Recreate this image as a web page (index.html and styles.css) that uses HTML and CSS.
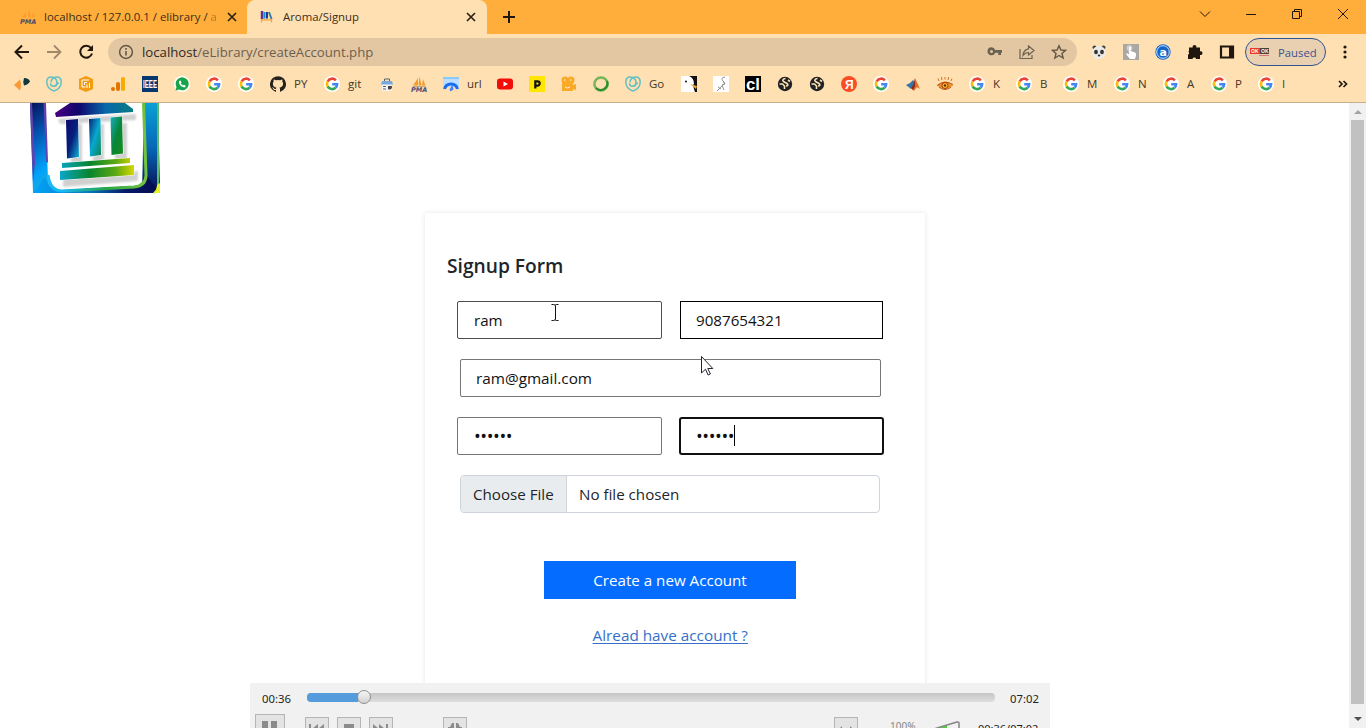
FILE: index.html
```html
<!DOCTYPE html>
<html lang="en">
<head>
<meta charset="utf-8">
<title>Aroma/Signup</title>
<link rel="stylesheet" href="styles.css">
</head>
<body>
<svg class="defs" width="0" height="0">
  <defs>
    <symbol id="g" viewBox="0 0 16 16"><circle cx="8" cy="8" r="8" fill="#fff"/><g fill="none" stroke-width="2.6"><path d="M11.900 4.300A5.100 5.100 0 0 0 3.600 5.500" stroke="#ea4335"/><path d="M3.600 5.500a5.100 5.100 0 0 0 0 5" stroke="#fbbc05"/><path d="M3.600 10.500a5.100 5.100 0 0 0 8 1.200" stroke="#34a853"/><path d="M11.600 11.700A5.100 5.100 0 0 0 13.100 8.300H8.200" stroke="#4285f4"/></g></symbol>
    <symbol id="heart" viewBox="0 0 16 16"><g fill="none" stroke="#62bfc4" stroke-width="1.500"><path d="M8 15C3.500 13.500.8 10 .8 6 .8 2.800 2.800 1 5.300 1c3.300 0 5.700 2.500 5.700 5.300 0 2.200-1.600 4-3.500 4S4.500 9 4.500 7.300"/><path d="M8 15c4.500-1.500 7.200-5 7.200-9 0-3.200-2-5-4.500-5C7.400 1 5 3.500 5 6.300"/><path d="M8 10.200c1.700 0 3-1.200 3-3h2"/></g></symbol>
    <symbol id="globe" viewBox="0 0 16 16"><circle cx="8" cy="8" r="7.200" fill="#202124"/><path d="M8.500 2.500c-2.500.3-3.500 1.800-2 3L10 7.500c1.500 1 1 2.500-1 2.500M2.500 8h3l2 2v3M11 4l2 1.500" stroke="#ffe0b3" stroke-width="1.600" fill="none"/></symbol>
    <symbol id="x" viewBox="0 0 10 10"><path d="M1 1l8 8M9 1L1 9" stroke="#2b2116" stroke-width="1.700"/></symbol>
    <symbol id="sail" viewBox="0 0 16 16"><path d="M2 9.500L7 2v7.500zM7.500 9.500L8.500 0l2.200 9.500zM11 9.500L12 3l2.500 6.500z" fill="#f59b2c"/><path d="M1 10h14l-1 1H2z" fill="#b8a58d"/><text x="0" y="15.500" class="pma">PMA</text></symbol>
    <linearGradient id="lg1" x1="0" y1="0" x2="0.300" y2="1"><stop offset="0" stop-color="#071057"/><stop offset=".4" stop-color="#0557b5"/><stop offset=".8" stop-color="#00a4fa"/><stop offset="1" stop-color="#20a8d8"/></linearGradient>
    <linearGradient id="lg2" x1="0" y1="0" x2="0" y2="1"><stop offset="0" stop-color="#09a1d5"/><stop offset=".5" stop-color="#0767b6"/><stop offset="1" stop-color="#060b50"/></linearGradient>
    <linearGradient id="lgb"><stop offset="0" stop-color="#00a4fa"/><stop offset=".45" stop-color="#0878bd"/><stop offset=".75" stop-color="#061a68"/><stop offset="1" stop-color="#060b50"/></linearGradient>
    <linearGradient id="lge" x1="0" y1="0" x2="1" y2="0"><stop offset="0" stop-color="#18b7f5"/><stop offset=".15" stop-color="#18b7f5"/><stop offset=".6" stop-color="#26a646"/><stop offset="1" stop-color="#74c43d"/></linearGradient>
    <linearGradient id="roof"><stop offset="0" stop-color="#4a0080"/><stop offset=".3" stop-color="#10056c"/><stop offset=".65" stop-color="#0868aa"/><stop offset="1" stop-color="#087b83"/></linearGradient>
    <linearGradient id="p1" x1="0" y1="0" x2="1" y2="1"><stop offset="0" stop-color="#10056c"/><stop offset=".5" stop-color="#05207d"/><stop offset="1" stop-color="#13b7d8"/></linearGradient>
    <linearGradient id="p2" x1="0" y1="0" x2="1" y2="1"><stop offset="0" stop-color="#06237b"/><stop offset=".5" stop-color="#08a8cf"/><stop offset="1" stop-color="#0b8450"/></linearGradient>
    <linearGradient id="p3" x1="0" y1="0" x2="1" y2="1"><stop offset="0" stop-color="#16afc0"/><stop offset=".5" stop-color="#08853a"/><stop offset="1" stop-color="#168c18"/></linearGradient>
    <linearGradient id="base"><stop offset="0" stop-color="#0aa6c8"/><stop offset=".4" stop-color="#07852d"/><stop offset=".75" stop-color="#5da812"/><stop offset="1" stop-color="#d6d800"/></linearGradient>
    <filter id="soft"><feGaussianBlur stdDeviation="1"/></filter>
  </defs>
</svg>

<header class="browser">
  <div class="tabs">
    <div class="tab tab-idle">
      <svg width="16" height="16" viewBox="0 0 16 16"><path d="M2 8l4-5v5zM8 8l1-8 2 8zM12 8l1-5 2 5z" fill="#ff9b2b"/><text x="0" y="14.500" class="pma">PMA</text></svg>
      <span class="tab-title idle-title">localhost / 127.0.0.1 / elibrary / <i>a</i></span>
      <svg width="10" height="10"><use href="#x"/></svg>
    </div>
    <div class="tab tab-active">
      <svg width="14" height="14" viewBox="0 0 14 14"><path d="M2 1v8" stroke="#63308e" stroke-width="2.500"/><path d="M4.500 2v6.500" stroke="#168cd5" stroke-width="2"/><path d="M7 2v6.500" stroke="#133a97" stroke-width="2"/><path d="M9 2l2.500 7" stroke="#387ca2" stroke-width="2"/><path d="M1.500 12.500V9.800h10v2.700" stroke="#f1a13a" stroke-width="1.300" fill="none"/></svg>
      <span class="tab-title">Aroma/Signup</span>
      <svg width="10" height="10"><use href="#x"/></svg>
    </div>
    <svg class="plus" width="12" height="12"><path d="M6 0v12M0 6h12" stroke="#20180e" stroke-width="2"/></svg>
    <div class="window-buttons">
      <svg width="12" height="12" viewBox="0 0 12 12"><path d="M1 3.500l5 5 5-5"/></svg>
      <svg width="12" height="12" viewBox="0 0 12 12"><path d="M1 6.500h10"/></svg>
      <svg width="12" height="12" viewBox="0 0 12 12"><path d="M1.500 3.500h7v7h-7zM3.500 3.500v-2h7v7h-2"/></svg>
      <svg width="12" height="12" viewBox="0 0 12 12"><path d="M1 1l10 10M11 1L1 11"/></svg>
    </div>
  </div>

  <div class="toolbar">
    <div class="nav">
      <svg width="16" height="16" viewBox="0 0 16 16"><path d="M15 8H2M8 1.500L1.500 8 8 14.500" stroke="#20180e" stroke-width="2" fill="none"/></svg>
      <svg width="16" height="16" viewBox="0 0 16 16"><path d="M1 8h13M8 1.500L14.500 8 8 14.500" stroke="#a08969" stroke-width="1.800" fill="none"/></svg>
      <svg width="16" height="16" viewBox="0 0 16 16"><path d="M13 4A6 6 0 1 0 14 9.500" stroke="#20180e" stroke-width="2" fill="none"/><path d="M15 1v6H9z" fill="#20180e"/></svg>
    </div>
    <div class="omnibox">
      <svg width="16" height="16" viewBox="0 0 16 16"><circle cx="8" cy="8" r="6.400" fill="none" stroke="#625744" stroke-width="1.500"/><path d="M8 7v4.500M8 4v1.700" stroke="#625744" stroke-width="1.600"/></svg>
      <span class="url"><b>localhost</b>/eLibrary/createAccount.php</span>
      <div class="omni-icons">
        <svg width="16" height="16" viewBox="0 0 16 16"><path fill-rule="evenodd" d="M4.500 3.300a4 4 0 1 0 3.700 5.500h3V11H14V8.800h1V6H8.200a4 4 0 0 0-3.700-2.700zm0 2.700a1.500 1.500 0 1 1 0 3 1.500 1.500 0 0 1 0-3z" fill="#6b6250"/></svg>
        <svg width="16" height="16" viewBox="0 0 16 16"><path d="M1 5v9.500h12V11M9.500 2L15 6.500 9.500 11V8.500C7 8.500 5.500 9.500 4 11.500c.3-4 2.500-6.200 5.500-6.700z" stroke="#6b6250" stroke-width="1.200" fill="none"/></svg>
        <svg width="16" height="16" viewBox="0 0 16 16"><path d="M8 1.800l1.900 4.200 4.600.4-3.500 3 1.100 4.600L8 11.500 3.900 14 5 9.400l-3.500-3 4.600-.4z" stroke="#625744" stroke-width="1.400" fill="none"/></svg>
      </div>
    </div>
    <div class="extensions">
      <svg width="16" height="16" viewBox="0 0 16 16"><circle cx="3.500" cy="3.500" r="2" fill="#444"/><circle cx="12.500" cy="3.500" r="2" fill="#444"/><ellipse cx="8" cy="8.500" rx="7" ry="6.500" fill="#eceae6"/><ellipse cx="5" cy="8" rx="1.900" ry="2.300" fill="#333"/><ellipse cx="11" cy="8" rx="1.900" ry="2.300" fill="#333"/><ellipse cx="8" cy="11.500" rx="1.300" ry=".9" fill="#333"/></svg>
      <svg width="16" height="16" viewBox="0 0 16 16"><path fill="#aaa8a3" d="M0 0h16v16H0z"/><path d="M5.500 3q1.500-1.500 2.500 0v4l4 1.500q1.500.5 1 3L12 15H7l-4-5 1-.8 2 1.300z" fill="#fff"/><circle cx="6.500" cy="4" r="2.500" stroke="#ddd" fill="none"/></svg>
      <svg width="16" height="16" viewBox="0 0 16 16"><circle cx="8" cy="8" r="7.700" fill="#1565c6"/><circle cx="8" cy="8" r="6.300" fill="#1565c6" stroke="#e8f1fb" stroke-width=".9"/><text x="4.600" y="11.700" class="ext-a">a</text></svg>
      <svg width="16" height="16" viewBox="0 0 16 16"><path d="M2 3.500h3.700a1.900 1.900 0 1 1 3.600 0H13v3.800a1.900 1.900 0 1 1 0 3.600V15H9.200a2 2 0 0 0-3.800 0H1v-4.200a2 2 0 0 0 0-3.600h1z" fill="#20180e"/></svg>
      <svg width="16" height="16" viewBox="0 0 16 16"><path d="M2 2.500h12v11H2z" fill="none" stroke="#20180e" stroke-width="2.200"/><path d="M10 2h4v12h-4z" fill="#20180e"/></svg>
    </div>
    <div class="profile">
      <svg width="20" height="10" viewBox="0 0 20 10"><path fill="#e6392b" d="M0 1h10v6H0z"/><path fill="#4a4040" d="M10 1h9v6h-9z"/><path fill="#d87870" d="M9 8h10v1H9z"/><text x="1" y="6" class="ok">OK</text><text x="11" y="6" class="ok">OK</text></svg>
      <span>Paused</span>
    </div>
    <svg class="kebab" width="4" height="14"><circle cx="2" cy="2" r="1.600"/><circle cx="2" cy="7" r="1.600"/><circle cx="2" cy="12" r="1.600"/></svg>
  </div>

  <nav class="bookmarks">
    <a><svg viewBox="0 0 16 16"><path d="M0 9l6-5.500Q8 9 6 14.500z" fill="#f99a36"/><path d="M10 2q5 0 6 3.500-2 3.500-6 4-1.500-3.500 0-7.500z" fill="#11383c"/></svg></a>
    <a><svg><use href="#heart"/></svg></a>
    <a><svg viewBox="0 0 16 16"><path d="M8 0l7 3v10l-7 3-7-3V3z" fill="#f39c12"/><path d="M11 4H4v7h3.500M9 6.500H6.500v2.500M9 12V8.500M11.500 12V7" stroke="#fff" fill="none"/></svg></a>
    <a><svg viewBox="0 0 16 16"><rect x="11" y="1" width="4" height="14" rx="2" fill="#f9ab00"/><rect x="6" y="6" width="4" height="9" rx="2" fill="#e37400"/><circle cx="3" cy="13" r="2" fill="#e37400"/></svg></a>
    <a><svg viewBox="0 0 16 16"><path d="M0 0h16v16H0z" fill="#06386f"/><text x="1" y="11.500" textLength="14" lengthAdjust="spacingAndGlyphs" class="ieee">IEEE</text></svg></a>
    <a><svg viewBox="0 0 16 16"><circle cx="8" cy="8" r="8" fill="#fff"/><path d="M1.500 14.500l1-3.500A6.500 6.500 0 1 1 5 13.500z" fill="#16a34b"/><path d="M5 5l1.500-.5 1 2-.7 1 2 2 1-.7 1.900 1-.5 1.500C7.500 11.500 4.500 8.500 5 5z" fill="#fff"/></svg></a>
    <a><svg><use href="#g"/></svg></a>
    <a><svg><use href="#g"/></svg></a>
    <a><svg viewBox="0 0 16 16"><path d="M8 .2a8 8 0 0 0-2.500 15.600c.4.100.5-.2.500-.4v-1.500c-2.200.5-2.700-1-2.700-1-.4-.9-.9-1.200-.9-1.200-.7-.5.100-.5.100-.5.800.1 1.200.8 1.200.8.700 1.300 1.900.9 2.300.7.100-.5.300-.9.500-1.100-1.800-.2-3.600-.9-3.600-4 0-.9.300-1.600.8-2.100-.1-.2-.4-1 .1-2.100 0 0 .7-.2 2.200.8a7.700 7.700 0 0 1 4 0c1.500-1 2.200-.8 2.200-.8.400 1.100.2 1.900.1 2.100.5.600.8 1.300.8 2.100 0 3.100-1.900 3.800-3.700 4 .3.300.6.700.6 1.500v2.300c0 .2.100.5.500.4A8 8 0 0 0 8 .2z" fill="#25211c"/></svg><span>PY</span></a>
    <a><svg><use href="#g"/></svg><span>git</span></a>
    <a><svg viewBox="0 0 16 16"><path d="M3 7h10v8H3z" fill="#f4f3ef"/><path d="M3 5h10l1 3.500H2z" fill="#79a8dd"/><path d="M5.500 5V3h5v2M4 10.500h3M4 13h3" stroke="#59636b" fill="none"/><path d="M9 10h4q0 5-4 3z" fill="#444"/></svg></a>
    <a><svg><use href="#sail"/></svg></a>
    <a><svg viewBox="0 0 16 16"><path d="M0 1h16v10H0z" fill="#bcdfff"/><path d="M0 1h16v2H0z" fill="#8bcaff"/><path d="M1.500 13a6.700 6.700 0 0 1 13 0" stroke="#196df1" stroke-width="3" fill="none"/><path d="M9.500 8.500l1 5-3 2-1-2z" fill="#4a82ef"/></svg><span>url</span></a>
    <a><svg viewBox="0 0 16 16"><rect y="2.500" width="16" height="11" rx="3" fill="#f10d09"/><path d="M6.500 5.500v5L11 8z" fill="#fff"/></svg></a>
    <a><svg viewBox="0 0 16 16"><path fill="#ffe600" d="M0 0h16v16H0z"/><path d="M6.300 12.500V5.300h2.200a2.200 2.200 0 0 1 0 4.400H6.500" stroke="#111" stroke-width="2.200" fill="none"/></svg></a>
    <a><svg viewBox="0 0 16 16"><g fill="#f8aa28"><circle cx="4" cy="4" r="3.500"/><circle cx="10" cy="4" r="3.500"/><path d="M1 6h11v3l3-1v6l-3-1v2H1z"/></g><path d="M3 4h1.500M9 4h1.500M4 11q2.500 2 5 0" stroke="#fff0cc" fill="none"/></svg></a>
    <a><svg viewBox="0 0 16 16"><circle cx="8" cy="8" r="6.600" fill="none" stroke="#76b65a" stroke-width="2.500"/><path d="M3 12A6.700 6.700 0 0 0 14 5" stroke="#318e2c" stroke-width="2.200" fill="none"/></svg></a>
    <a><svg><use href="#heart"/></svg><span>Go</span></a>
    <a><svg viewBox="0 0 16 16"><path d="M0 0h16v16H0z" fill="#111"/><path d="M0 0h8q5 2 5 8-2 0 1 8H0z" fill="#fff"/><circle cx="5" cy="5.500" r="1" fill="#111"/><path d="M9 8l7 2-1 3z" fill="#e9a13b"/></svg></a>
    <a><svg viewBox="0 0 16 16"><path d="M0 0h16v16H0z" fill="#fff"/><path d="M12 1q-5 1-2 4 3 2-1 5l-5 5M10 5l2 3-3 1 2 5M5 11l3 2" stroke="#888" stroke-width=".9" fill="none"/></svg></a>
    <a><svg viewBox="0 0 16 16"><path d="M0 0h16v16H0z" fill="#000"/><text x="1" y="13.500" textLength="14" lengthAdjust="spacingAndGlyphs" class="cl">cl</text></svg></a>
    <a><svg><use href="#globe"/></svg></a>
    <a><svg><use href="#globe"/></svg></a>
    <a><svg viewBox="0 0 16 16"><circle cx="8" cy="8" r="8" fill="#fb4d23"/><text x="4" y="12.500" class="ya">Я</text></svg></a>
    <a><svg><use href="#g"/></svg></a>
    <a><svg viewBox="0 0 16 16"><path d="M1 9l4-2 3-3 2 3-4 6z" fill="#3974a6"/><path d="M6 12q3-3 4-10l5 11-3-2-3 4z" fill="#e16d24"/><path d="M6 12q3-3 4-10v8l-2 4z" fill="#872a21"/></svg></a>
    <a><svg viewBox="0 0 16 16"><path d="M0 9.500Q8 1.500 16 9.500 8 16.500 0 9.500z" fill="#e6922d"/><path d="M0 9.500Q8 3.500 16 8.500M2 11q6 5 12 0" stroke="#bd541c" fill="none"/><circle cx="8" cy="9.500" r="3" fill="#fcc22c" stroke="#a63917"/><circle cx="8" cy="9.500" r="1.200" fill="#6b2511"/><path d="M2 5L1 2.500M5 4l-.7-3M8 3.500V1M11 4l.7-3M14 5l1-2.500" stroke="#ce7027"/></svg></a>
    <a><svg><use href="#g"/></svg><span>K</span></a>
    <a><svg><use href="#g"/></svg><span>B</span></a>
    <a><svg><use href="#g"/></svg><span>M</span></a>
    <a><svg><use href="#g"/></svg><span>N</span></a>
    <a><svg><use href="#g"/></svg><span>A</span></a>
    <a><svg><use href="#g"/></svg><span>P</span></a>
    <a><svg><use href="#g"/></svg><span>I</span></a>
    <a><svg viewBox="0 0 16 16"><path d="M4 5l3 3-3 3M8.500 5l3 3-3 3" stroke="#20180e" stroke-width="1.700" fill="none"/></svg></a>
  </nav>
</header>

<div class="viewport">
  <main class="page">
    <svg class="logo" width="132" height="91" viewBox="0 0 132 91">
      <path d="M0 0h15l3 76q1 13 13 14H3z" fill="url(#lg1)"/>
      <path d="M0 0h2l3 60-2 20zM13.500 0h2.500l2 60-2-2z" fill="#6042ae"/>
      <path d="M114 0h14l2 84-5 6h-13z" fill="url(#lg2)"/>
      <path d="M3 90l12-16q4 14 17 13l72-4q11-1 11-13l11 15-2 5z" fill="url(#lgb)"/>
      <path d="M18 72q2 16 14 16l72-4q12-1 12-12L113.500 0" fill="none" stroke="url(#lge)" stroke-width="3"/>
      <path d="M128 0v83q0 4-4 7" fill="none" stroke="#5cb968" stroke-width="2"/><path d="M130 80v10h-7q4-3 4-8z" fill="#e7ef25"/>
      <g fill="#d0d0d0" filter="url(#soft)" transform="translate(3 4)"><path d="M25 12L103 7v6l-76 4zM38 17h11v40H38zM60 17h11v39H60zM82 16h12v37H82zM30 70l75-6v10l-75 6z"/></g>
      <path d="M40 0h55l8 6v3L26 14 25 10z" fill="url(#roof)"/>
      <g stroke="#fff" stroke-width="1" paint-order="stroke"><path d="M36 17l12-1 1 38-12 1.500z" fill="url(#p1)"/><path d="M59 16l11.500-1 .5 37-11 1.500z" fill="url(#p2)"/><path d="M80.500 14.500l11.500-1 1 37-11.500 1.500z" fill="url(#p3)"/>
      <path d="M32 60l68-5v5l-68 5zM30 68l74-6v10l-74 5z" fill="url(#base)"/></g>
    </svg>
    <section class="card">
      <h1>Signup Form</h1>
      <form class="form">
        <div class="row"><div class="field dark-grey w-left">ram</div><div class="field black w-phone">9087654321</div></div>
        <div class="field email">ram@gmail.com</div>
        <div class="row row-pass"><div class="field w-left dots">••••••</div><div class="field focused dots">••••••<span class="caret"></span></div></div>
        <div class="file"><span class="choose"><em>Choose File</em></span><span class="chosen">No file chosen</span></div>
        <div class="submit"><span>Create a new Account</span></div>
        <a class="login">Alread have account ?</a>
      </form>
    </section>
  </main>
  <div class="scrollbar"><span class="up"></span><span class="thumb"></span><span class="down"></span></div>
</div>

<svg class="cursor-text" width="8" height="17"><path d="M.5.500h2q1.500 0 1.500 1 0-1 1.500-1h2M.5 16.500h2q1.500 0 1.500-1 0 1 1.500 1h2M4.500 1.500v14" stroke="#111" fill="none"/></svg>
<svg class="cursor-arrow" width="13" height="20"><path d="M.5.500v16.500l4-3.800 2.600 5.800 2.300-1-2.600-5.500h5z" fill="#fff" stroke="#252530"/></svg>

<div class="player">
  <div class="seek"><span class="time">00:36</span><div class="track"><div class="played"></div><div class="knob"></div></div><span class="time">07:02</span></div>
  <div class="controls">
    <span class="btn play"><svg width="18" height="13"><path d="M1 0h6v13H1zM10 0h6v13h-6z"/></svg></span>
    <span class="btn"><svg width="18" height="9"><path d="M1 0h2v9H1zM4 5l6-5v9zM10 5l6-5v9z"/></svg></span>
    <span class="btn"><svg width="12" height="9"><path d="M1 0h10v9H1z"/></svg></span>
    <span class="btn"><svg width="18" height="9"><path d="M1 0l6 5-6 4zM7 0l6 5-6 4zM14 0h2v9h-2z"/></svg></span>
    <span class="btn full"><svg width="16" height="10"><path d="M5 0h2v6H1V4h2zM9 0h2l2 4h2v2H9z"/></svg></span>
    <span class="btn stretch"><svg width="16" height="8"><path d="M1 3l3-3v2h8V0l3 3-3 3H4z"/></svg></span>
    <span class="percent">100%</span>
    <svg class="volume" width="32" height="12"><path d="M1 9L27 1v11H0z" fill="#f2f2f2"/><path d="M0 8.500L15 4.500V12H0z" fill="#49d338"/><path d="M0 8.500L25 1q2-.5 2 1.500V12" fill="none" stroke="#858585" stroke-width="1.500"/></svg>
    <span class="total">00:36/07:02</span>
  </div>
</div>
</body>
</html>
```

FILE: styles.css
```css
* { box-sizing: border-box; }
body { margin: 0; width: 1366px; height: 728px; overflow: hidden; position: relative; display: flex; flex-direction: column; background: #fff; font-family: "Open Sans", "Noto Sans", sans-serif; color: #212529; }
.defs { position: absolute; }
svg { display: block; flex: none; }

/* Browser frame */
.browser { height: 103px; background: #ffe0b3; border-bottom: 1px solid #c9b08c; }
.tabs { height: 34px; background: #ffae3b; display: flex; align-items: center; }
.tab { height: 34px; display: flex; align-items: center; font-size: 11.4px; color: #3c2d18; }
.tab-idle { width: 247px; padding: 0 10px 0 20px; gap: 8px; }
.tab-title { flex: 1; padding-bottom: 2px; white-space: nowrap; overflow: hidden; }
.idle-title { letter-spacing: 0; }
.idle-title i { font-style: normal; opacity: .4; }
.tab-active { width: 240px; padding: 0 11px 0 13px; gap: 9px; background: #ffe0b3; border-radius: 8px 8px 0 0; }
.plus { margin-left: 16px; }
.window-buttons { margin-left: auto; margin-right: 17px; margin-bottom: 6px; display: flex; gap: 34px; fill: none; stroke: #20180e; stroke-width: 1; }
.toolbar { height: 36px; display: flex; align-items: center; }
.nav { width: 108px; padding-left: 14px; display: flex; gap: 16px; }
.omnibox { width: 969px; height: 28px; border-radius: 14px; background: #e3c7a3; display: flex; align-items: center; padding: 0 10px; gap: 8px; }
.url { flex: 1; font-size: 13.2px; color: #6d604d; }
.url b { font-weight: 400; color: #31291e; }
.omni-icons { display: flex; gap: 16px; }
.extensions { margin-left: 14px; display: flex; gap: 16px; }
.profile { margin-left: 10px; width: 81px; height: 28px; border: 1px solid #315391; border-radius: 14px; background: #e8d0b0; display: flex; align-items: center; gap: 8px; padding-left: 4px; font-size: 11.3px; color: #3c5290; }
.kebab { margin-left: 17px; fill: #20180e; }
.bookmarks { height: 28px; padding-left: 14px; display: grid; align-items: center; grid-template-columns: repeat(8, 32px) 54px 55px 32px 32px 54px repeat(4, 32px) 56px repeat(9, 32px) 47px 47px 51px 49px 48px 47px 77px 16px; font-size: 11.5px; color: #46371f; }
.bookmarks a { display: flex; align-items: center; gap: 8px; }
.bookmarks span { padding-bottom: 2px; }
.bookmarks svg { width: 16px; height: 16px; }
.pma { font: italic bold 6.5px "DejaVu Sans", sans-serif; fill: #504b70; }
.ext-a { font: bold 11px "DejaVu Sans", sans-serif; fill: #fff; }
.ok { font: bold 5px "Liberation Sans", sans-serif; fill: #fff; }
.ieee { font: bold 10px "Liberation Sans", sans-serif; fill: #fff; }
.cl { font: bold 16px "Liberation Sans", sans-serif; fill: #fff; }
.ya { font: bold 12px "Liberation Sans", sans-serif; fill: #fff; }

/* Web page */
.viewport { height: 625px; display: flex; }
.page { flex: 1; overflow: hidden; }
.logo { margin-left: 30px; }
.card { width: 500px; height: 560px; margin: 19px 0 0 425px; padding: 38px 41px 0 22px; box-shadow: 0 0 5px rgba(0, 0, 0, .1); }
h1 { margin: 0; height: 30px; line-height: 30px; font-size: 19.2px; font-weight: 600; white-space: nowrap; }
.form { margin: 20px 0 0 10px; display: flex; flex-direction: column; gap: 20px; font-size: 15.15px; }
.row { display: flex; gap: 18px; }
.row-pass { gap: 17px; }
.field { height: 38px; border: 1px solid #767676; border-radius: 2px; padding-left: 16px; display: flex; align-items: center; color: #111; }
.w-left { width: 205px; }
.w-phone { width: 203px; padding-left: 15px; }
.dark-grey { border-color: #4c4c4c; }
.black { border-color: #000; border-radius: 0; }
.email { width: 421px; margin-left: 3px; padding-left: 15px; font-size: 15.3px; }
.dots { font-size: 18px; letter-spacing: -.4px; }
.focused { width: 205px; border: 2px solid #101010; border-radius: 3px; padding-left: 15px; }
.caret { width: 1px; height: 21px; margin-top: -1px; background: #000; }
.file { width: 420px; height: 38px; margin-left: 3px; border: 1px solid #ced4da; border-radius: 4px; display: flex; align-items: center; overflow: hidden; }
.choose { width: 106px; height: 36px; padding-left: 12px; background: #e9ecef; border-right: 1px solid #ced4da; display: flex; align-items: center; white-space: nowrap; }
.choose em { font-style: normal; }
.chosen { padding-left: 12px; }
.submit { width: 252px; height: 38px; margin: 28px 0 0 87px; background: #046dff; color: #fff; display: flex; align-items: center; justify-content: center; }
.login { align-self: flex-start; margin: -4px 0 0 135.5px; line-height: 40px; font-size: 15.3px; color: #356fc9; text-decoration: underline; text-underline-offset: 2px; }
.scrollbar { width: 17px; height: 625px; background: #f1f1f1; display: flex; flex-direction: column; align-items: center; }
.up, .down { border: 4px solid transparent; }
.up { border-top: 0; border-bottom: 4px solid #a3a3a3; margin: 7px 0 6px; }
.thumb { width: 13px; height: 584px; background: #c1c1c1; }
.down { border-bottom: 0; border-top: 4px solid #505050; margin-top: 13px; }

/* Mouse pointers and the media player float over the page */
.cursor-text { position: absolute; left: 551px; top: 304px; }
.cursor-arrow { position: absolute; left: 701px; top: 356px; }
.player { position: absolute; left: 250px; top: 683px; width: 800px; height: 45px; overflow: hidden; background: rgba(241, 241, 241, .97); font-family: "Noto Sans", sans-serif; font-size: 11px; color: #222; }
.seek { height: 31px; padding: 0 10px 0 12px; display: flex; align-items: center; }
.time { width: 30px; flex: none; white-space: nowrap; font-size: 11.3px; }
.track { width: 688px; height: 9px; flex: none; margin: -3px 15px 0 15px; border-radius: 4px; background: linear-gradient(#c5c5c5, #dedede); display: flex; align-items: center; }
.played { width: 51px; height: 9px; border-radius: 4px 0 0 4px; background: #559cdd; }
.knob { width: 14px; height: 14px; flex: none; margin-left: -1px; border: 1px solid #8e8e8e; border-radius: 50%; background: linear-gradient(#f5f5f5, #d2d2d2); }
.controls { height: 30px; padding-left: 5px; display: flex; align-items: flex-start; fill: #8b8b8b; }
.btn { width: 24px; height: 24px; margin: 3px 8px 0 0; padding-top: 6px; flex: none; border: 1px solid #b5b5b5; background: #e3e3e3; display: flex; align-items: flex-start; justify-content: center; }
.play { width: 30px; height: 30px; margin: 0 20px 0 0; }
.full { margin-left: 42px; padding-top: 5px; }
.stretch { margin-left: 359px; padding-top: 8px; }
.percent { width: 42px; margin: 6px 0 0 24px; font-size: 10px; line-height: 12px; color: #888; }
.volume { margin-top: 7px; }
.total { margin: 7px 0 0 14px; white-space: nowrap; }
```
